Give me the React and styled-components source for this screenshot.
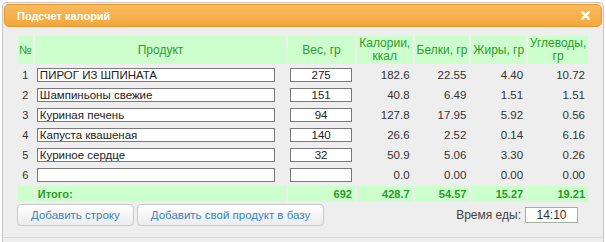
import React from "react";
import styled, { createGlobalStyle } from "styled-components";

const GlobalStyle = createGlobalStyle`
  html, body {
    margin: 0;
    padding: 0;
    background: #ffffff;
    font-family: "Liberation Sans", Arial, sans-serif;
    overflow: hidden;
  }
`;

const Dialog = styled.div`
  margin: 2px 2px 0 2px;
  height: 240px;
  border: 1px solid #c6c6c6;
  border-bottom: none;
  border-radius: 5px 5px 0 0;
  background: #eeeeee;
  padding: 1px;
  box-sizing: border-box;
`;

const TitleBar = styled.div`
  height: 23px;
  box-sizing: border-box;
  display: flex;
  align-items: center;
  justify-content: space-between;
  padding: 0 11px 0 12px;
  border: 1px solid #e6982c;
  border-radius: 5px;
  background: linear-gradient(#f8bb5c, #f3a73e);
`;

const Title = styled.span`
  color: #ffffff;
  font-weight: bold;
  font-size: 11px;
`;

const Close = styled.svg`
  width: 9px;
  height: 9px;
  display: block;
`;

const Content = styled.div`
  padding: 7px 12px 0 12px;
`;

const Table = styled.table`
  border-collapse: separate;
  border-spacing: 2px;
  font-size: 11px;
  color: #333;
`;

const Head = styled.th`
  background: #ccffcc;
  color: #2c9c2c;
  font-weight: normal;
  font-size: 12px;
  line-height: 13px;
  height: 28px;
  padding: 0;
  width: ${(p) => p.w}px;
  text-align: center;
  vertical-align: middle;
`;

const Row = styled.tr`
  height: 18px;
`;

const NumCell = styled.td`
  text-align: center;
  padding: 0;
  color: #333;
`;

const InputCell = styled.td`
  padding: 0 0 0 2px;
`;

const TextInput = styled.input`
  display: block;
  box-sizing: border-box;
  width: ${(p) => p.w}px;
  height: 14px;
  border: 1px solid #7a7a7a;
  background: #ffffff;
  padding: 0 2px;
  margin: 0;
  font-family: "Liberation Sans", Arial, sans-serif;
  font-size: 11.5px;
  color: #222;
  text-align: ${(p) => (p.center ? "center" : "left")};
  outline: none;
`;

const Value = styled.td`
  text-align: right;
  padding: 0 3px 0 0;
  color: #333;
  font-size: 11.5px;
`;

const TotalRow = styled.tr`
  height: 16px;
`;

const TotalCell = styled.td`
  background: #ccffcc;
  color: #2b9a2b;
  font-weight: bold;
  font-size: 11px;
  padding: ${(p) => (p.left ? "0 0 0 3px" : "0 3px 0 0")};
  text-align: ${(p) => (p.left ? "left" : "right")};
`;

const Toolbar = styled.div`
  display: flex;
  align-items: center;
  padding: 0 0 0 1px;
  width: 562px;
  box-sizing: border-box;
`;

const Button = styled.button`
  height: 22px;
  box-sizing: border-box;
  margin-right: 3px;
  padding: 0 13px;
  border: 1px solid #c9c9c9;
  border-radius: 4px;
  background: linear-gradient(#ffffff, #ececec);
  color: #3387c4;
  font-family: "Liberation Sans", Arial, sans-serif;
  font-size: 11.5px;
  cursor: pointer;
`;

const Spacer = styled.div`
  flex: 1;
`;

const TimeLabel = styled.span`
  font-size: 12px;
  color: #444;
  margin-right: 4px;
`;

const TimeInput = styled.input`
  box-sizing: border-box;
  width: 53px;
  height: 16px;
  border: 1px solid #a3b3a3;
  background: #ffffff;
  font-family: "Liberation Sans", Arial, sans-serif;
  font-size: 12px;
  color: #333;
  text-align: center;
  padding: 0;
  margin: 0;
  outline: none;
`;

const Footer = styled.div`
  margin-top: 11px;
  border-top: 1px solid #d9d9d9;
`;

const columns = [
  { label: "№", w: 15 },
  { label: "Продукт", w: 252 },
  { label: "Вес, гр", w: 67 },
  { label: ["Калории,", "ккал"], w: 56 },
  { label: "Белки, гр", w: 56 },
  { label: "Жиры, гр", w: 56 },
  { label: ["Углеводы,", "гр"], w: 60 },
];

const rows = [
  { name: "ПИРОГ ИЗ ШПИНАТА", weight: "275", kcal: "182.6", p: "22.55", f: "4.40", c: "10.72" },
  { name: "Шампиньоны свежие", weight: "151", kcal: "40.8", p: "6.49", f: "1.51", c: "1.51" },
  { name: "Куриная печень", weight: "94", kcal: "127.8", p: "17.95", f: "5.92", c: "0.56" },
  { name: "Капуста квашеная", weight: "140", kcal: "26.6", p: "2.52", f: "0.14", c: "6.16" },
  { name: "Куриное сердце", weight: "32", kcal: "50.9", p: "5.06", f: "3.30", c: "0.26" },
  { name: "", weight: "", kcal: "0.0", p: "0.00", f: "0.00", c: "0.00" },
];

export default function App() {
  return (
    <>
      <GlobalStyle />
      <Dialog>
        <TitleBar>
          <Title>Подсчет калорий</Title>
          <Close viewBox="0 0 9 9">
            <path d="M1.2 1.2 L7.8 7.8 M7.8 1.2 L1.2 7.8" stroke="#fff" strokeWidth="2.4" strokeLinecap="round" />
          </Close>
        </TitleBar>
        <Content>
          <Table>
            <thead>
              <tr>
                {columns.map((c, i) => (
                  <Head key={i} w={c.w}>
                    {Array.isArray(c.label) ? (
                      <>
                        {c.label[0]}
                        <br />
                        {c.label[1]}
                      </>
                    ) : (
                      c.label
                    )}
                  </Head>
                ))}
              </tr>
            </thead>
            <tbody>
              {rows.map((r, i) => (
                <Row key={i}>
                  <NumCell>{i + 1}</NumCell>
                  <InputCell>
                    <TextInput w={238} defaultValue={r.name} />
                  </InputCell>
                  <InputCell>
                    <TextInput w={62} center defaultValue={r.weight} />
                  </InputCell>
                  <Value>{r.kcal}</Value>
                  <Value>{r.p}</Value>
                  <Value>{r.f}</Value>
                  <Value>{r.c}</Value>
                </Row>
              ))}
              <TotalRow>
                <TotalCell />
                <TotalCell left>Итого:</TotalCell>
                <TotalCell>692</TotalCell>
                <TotalCell>428.7</TotalCell>
                <TotalCell>54.57</TotalCell>
                <TotalCell>15.27</TotalCell>
                <TotalCell>19.21</TotalCell>
              </TotalRow>
            </tbody>
          </Table>
          <Toolbar>
            <Button>Добавить строку</Button>
            <Button>Добавить свой продукт в базу</Button>
            <Spacer />
            <TimeLabel>Время еды:</TimeLabel>
            <TimeInput defaultValue="14:10" />
          </Toolbar>
        </Content>
        <Footer />
      </Dialog>
    </>
  );
}
